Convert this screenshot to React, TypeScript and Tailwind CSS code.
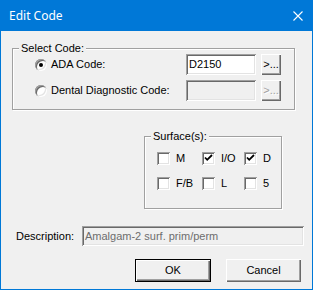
import React from 'react';

const font = "font-['Liberation_Sans',Arial,sans-serif] text-[11px] leading-[13px] text-black";
const sunken =
  'shadow-[inset_1px_1px_0_#a0a0a0,inset_-1px_-1px_0_#ffffff,inset_2px_2px_0_#696969,inset_-2px_-2px_0_#e3e3e3]';
const raised =
  'shadow-[inset_1px_1px_0_#ffffff,inset_-1px_-1px_0_#696969,inset_-2px_-2px_0_#a0a0a0]';
const etched = 'border border-[#a0a0a0] shadow-[inset_1px_1px_0_#ffffff,1px_1px_0_#ffffff]';

function Radio({ checked }: { checked?: boolean }) {
  return (
    <div className={`w-[12px] h-[12px] rounded-full bg-white flex items-center justify-center ${sunken}`}>
      {checked && <div className="w-[4px] h-[4px] rounded-full bg-black" />}
    </div>
  );
}

function Check({ checked, label }: { checked?: boolean; label: string }) {
  return (
    <div className="flex items-center h-[13px]">
      <div className={`w-[13px] h-[13px] bg-white shrink-0 ${sunken}`}>
        {checked && (
          <svg width="13" height="13" viewBox="0 0 13 13">
            <path d="M3 5.5 L5.2 7.8 L10 3" fill="none" stroke="#000" strokeWidth="1.8" />
          </svg>
        )}
      </div>
      <span className="ml-[6px]">{label}</span>
    </div>
  );
}

function GroupLabel({ text }: { text: string }) {
  return (
    <span className="absolute left-[6px] top-[-7px] px-[2px] bg-[#f0f0f0] leading-[13px]">{text}</span>
  );
}

export default function App() {
  return (
    <div className={`w-[313px] h-[290px] bg-[#0078d7] flex flex-col px-px pb-px ${font}`}>
      <div className="h-[31px] shrink-0 flex items-center justify-between pl-[8px] pr-[9px] text-white">
        <span className="font-['Noto_Sans',sans-serif] text-[12px] leading-[16px] text-white">Edit Code</span>
        <svg width="10" height="10" viewBox="0 0 10 10">
          <path d="M0.5 0.5 L9.5 9.5 M9.5 0.5 L0.5 9.5" stroke="#fff" strokeWidth="1.1" />
        </svg>
      </div>

      <div className="flex-1 bg-[#f0f0f0] flex flex-col">
        {/* select code group */}
        <div className={`relative mt-[17px] ml-[11px] w-[283px] pt-[5px] pb-[8px] pr-[13px] ${etched}`}>
          <GroupLabel text="Select Code:" />
          <div className="flex items-center h-[21px]">
            <div className="ml-[22px]">
              <Radio checked />
            </div>
            <span className="ml-[4px] flex-1">ADA Code:</span>
            <div className={`w-[70px] h-[21px] bg-white pl-[3px] flex items-center ${sunken}`}>D2150</div>
            <div className={`ml-[5px] w-[20px] h-[21px] bg-[#f0f0f0] flex items-center justify-center pb-[1px] ${raised}`}>
              &gt;...
            </div>
          </div>
          <div className="flex items-center h-[21px] mt-[5px]">
            <div className="ml-[22px]">
              <Radio />
            </div>
            <span className="ml-[4px] flex-1">Dental Diagnostic Code:</span>
            <div className={`w-[70px] h-[21px] bg-[#f0f0f0] ${sunken}`} />
            <div
              className={`ml-[5px] w-[20px] h-[21px] bg-[#f0f0f0] flex items-center justify-center pb-[1px] text-[#a0a0a0] [text-shadow:1px_1px_0_#fff] ${raised}`}
            >
              &gt;...
            </div>
          </div>
        </div>

        {/* surfaces group */}
        <div className={`relative mt-[26px] ml-[143px] w-[138px] pt-[15px] pb-[18px] pl-[12px] ${etched}`}>
          <GroupLabel text="Surface(s):" />
          <div className="grid grid-cols-[45px_42px_1fr] gap-y-[12px]">
            <Check label="M" />
            <Check label="I/O" checked />
            <Check label="D" checked />
            <Check label="F/B" />
            <Check label="L" />
            <Check label="5" />
          </div>
        </div>

        {/* description */}
        <div className="flex items-center mt-[17px]">
          <span className="ml-[15px] w-[66px]">Description:</span>
          <div className={`w-[222px] h-[20px] bg-[#f0f0f0] pl-[3px] flex items-center text-[#6d6d6d] ${sunken}`}>
            Amalgam-2 surf. prim/perm
          </div>
        </div>

        {/* buttons */}
        <div className="flex mt-[13px]">
          <div className="ml-[134px] w-[76px] h-[23px] border border-black">
            <div className={`w-full h-full bg-[#f0f0f0] flex items-center justify-center ${raised}`}>OK</div>
          </div>
          <div className={`ml-[15px] w-[75px] h-[23px] bg-[#f0f0f0] flex items-center justify-center ${raised}`}>
            Cancel
          </div>
        </div>
      </div>
    </div>
  );
}
